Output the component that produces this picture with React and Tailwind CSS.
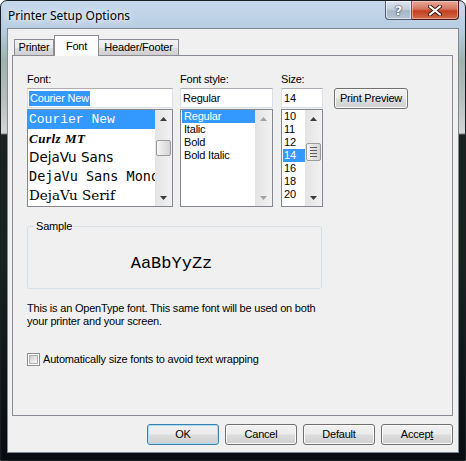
const ArrowUp = ({ disabled }) => (
  <svg width="7" height="4" viewBox="0 0 7 4">
    <polygon points="0,4 7,4 3.5,0" fill={disabled ? '#a3a3a3' : '#3b3b3b'} />
  </svg>
)

const ArrowDown = ({ disabled }) => (
  <svg width="7" height="4" viewBox="0 0 7 4">
    <polygon points="0,0 7,0 3.5,4" fill={disabled ? '#a3a3a3' : '#3b3b3b'} />
  </svg>
)

const ScrollBar = ({ thumbTop, thumbHeight, grip, disabled }) => (
  <div className="flex w-[17px] shrink-0 flex-col bg-[linear-gradient(to_right,#e3e3e3,#f2f2f2)]">
    <div className="flex h-[17px] items-center justify-center">
      <ArrowUp disabled={disabled} />
    </div>
    <div className="flex-1 px-[1px]">
      {!disabled && (
        <div
          className="flex flex-col items-center justify-center gap-[2px] rounded-[2px] border border-[#9b9b9b] bg-[linear-gradient(to_right,#f6f6f6,#e2e2e2_55%,#d4d4d4)]"
          style={{ marginTop: thumbTop, height: thumbHeight }}
        >
          {grip && (
            <>
              <div className="h-px w-[7px] bg-[#5a5a5a]" />
              <div className="h-px w-[7px] bg-[#5a5a5a]" />
              <div className="h-px w-[7px] bg-[#5a5a5a]" />
              <div className="h-px w-[7px] bg-[#5a5a5a]" />
            </>
          )}
        </div>
      )}
    </div>
    <div className="flex h-[17px] items-center justify-center">
      <ArrowDown disabled={disabled} />
    </div>
  </div>
)

const TextBox = ({ children, className }) => (
  <div
    className={`flex h-[20px] items-center border border-[#dbdfe6] border-t-[#abadb3] bg-white pl-[1px] ${className}`}
  >
    {children}
  </div>
)

const fontItems = [
  { name: 'Courier New', cls: "font-['Liberation_Mono',monospace] text-[13px] tracking-normal", selected: true },
  { name: 'Curlz MT', cls: "font-['Liberation_Serif',serif] italic font-bold text-[13px] tracking-[0.5px]" },
  { name: 'DejaVu Sans', cls: "font-['DejaVu_Sans',sans-serif] text-[13.5px] tracking-normal" },
  { name: 'DejaVu Sans Mono', cls: "font-['DejaVu_Sans_Mono',monospace] text-[13.5px] tracking-normal" },
  { name: 'DejaVu Serif', cls: "font-['DejaVu_Serif',serif] text-[13.5px] tracking-normal" },
]

const styleItems = ['Regular', 'Italic', 'Bold', 'Bold Italic']
const sizeItems = ['10', '11', '12', '14', '16', '18', '20']

const Button = ({ children, isDefault, className = '' }) => (
  <div
    className={`flex h-[21px] items-center justify-center rounded-[3px] border ${
      isDefault
        ? 'border-[#3c7fb1] shadow-[inset_0_0_0_1px_#a9dcf6]'
        : 'border-[#707070] shadow-[inset_0_0_0_1px_#fbfbfb]'
    } bg-[linear-gradient(to_bottom,#f2f2f2,#ebebeb_48%,#dddddd_52%,#cfcfcf)] ${className}`}
  >
    {children}
  </div>
)

export default function App() {
  return (
    <div className="flex h-[461px] w-[466px] flex-col overflow-hidden rounded-t-[7px] border border-[#1a1f24] bg-[linear-gradient(to_bottom,#c6d8ec_0px,#b8cde2_28px,#9eb3ad_60px,#b5bdbb_95px,#d3d5d5_132px,#1a211f_134px,#17231d_260px,#10161a_360px,#090c10_100%)] font-['Liberation_Sans',Arial,sans-serif] text-[11px] tracking-[-0.2px] text-black">
      {/* title bar */}
      <div className="flex h-[27px] shrink-0 items-start justify-between">
        <div className="pl-[7px] pt-[7px] font-['Noto_Sans',sans-serif] text-[12px] leading-[15px] tracking-normal [text-shadow:0_0_6px_#ffffff,0_0_8px_#ffffff]">
          Printer Setup Options
        </div>
        <div className="mr-[6px] flex">
          <div className="flex h-[19px] w-[27px] items-center justify-center rounded-bl-[4px] border border-t-0 border-[#4f5d6e] bg-[linear-gradient(to_bottom,#dfe6ee,#c3cfdc_45%,#a9b8c9_55%,#b6c5d4)] shadow-[inset_0_0_0_1px_rgba(255,255,255,0.55)]">
            <span className="font-['DejaVu_Sans',sans-serif] text-[13px] font-bold leading-none text-white [text-shadow:0_0_1px_#223,0_0_2px_#223]">
              ?
            </span>
          </div>
          <div className="flex h-[19px] w-[47px] items-center justify-center rounded-br-[4px] border border-l-0 border-t-0 border-[#4a1a12] bg-[linear-gradient(to_bottom,#e9a99a,#d5735f_45%,#c2401f_55%,#d16a4b)] shadow-[inset_0_0_0_1px_rgba(255,220,210,0.5)]">
            <svg width="14" height="11" viewBox="0 0 14 11">
              <path d="M2 1.5 L12 9.5 M12 1.5 L2 9.5" stroke="#3b1a14" strokeWidth="4" strokeLinecap="round" />
              <path d="M2 1.5 L12 9.5 M12 1.5 L2 9.5" stroke="#ffffff" strokeWidth="2.2" strokeLinecap="round" />
            </svg>
          </div>
        </div>
      </div>

      {/* client area */}
      <div className="mx-[6px] flex flex-col border border-[#7d8994] bg-[#f0f0f0] pl-[4px] pr-[5px] pt-[6px] pb-[7px]">
        {/* tabs */}
        <div className="ml-[2px] flex h-[20px] items-end">
          <div className="flex h-[16px] w-[40px] items-center justify-center border border-b-0 border-[#898c95] bg-[linear-gradient(to_bottom,#f3f3f3,#ebebeb_50%,#dddddd_51%,#cfcfcf)]">
            Printer
          </div>
          <div className="relative z-10 -mb-px flex h-[21px] w-[45px] items-start justify-center border border-b-0 border-[#898c95] bg-[#fcfcfc] pt-[2px]">
            Font
          </div>
          <div className="flex h-[16px] w-[80px] items-center justify-center border border-b-0 border-l-0 border-[#898c95] bg-[linear-gradient(to_bottom,#f3f3f3,#ebebeb_50%,#dddddd_51%,#cfcfcf)]">
            Header/Footer
          </div>
        </div>

        {/* panel */}
        <div className="flex h-[361px] w-[441px] flex-col border border-[#898c95] bg-[#f0f0f0] pl-[14px] pt-[17px]">
          <div className="flex items-start">
            {/* font column */}
            <div className="flex w-[146px] flex-col">
              <div className="mb-[2px] h-[13px] leading-[13px]">Font:</div>
              <TextBox>
                <span className="bg-[#3399ff] px-[1px] leading-[15px] text-white">Courier New</span>
              </TextBox>
              <div className="mt-[1px] flex h-[98px] border border-[#828790] bg-white">
                <div className="flex-1 overflow-hidden">
                  {fontItems.map((f) => (
                    <div
                      key={f.name}
                      className={`flex h-[19px] items-center whitespace-nowrap pl-[1px] ${f.cls} ${
                        f.selected ? 'bg-[#3399ff] text-white' : ''
                      }`}
                    >
                      {f.name}
                    </div>
                  ))}
                </div>
                <ScrollBar thumbTop={13} thumbHeight={16} />
              </div>
            </div>

            {/* font style column */}
            <div className="ml-[7px] flex w-[93px] flex-col">
              <div className="mb-[2px] h-[13px] leading-[13px]">Font style:</div>
              <TextBox>
                <span className="pl-[1px]">Regular</span>
              </TextBox>
              <div className="mt-[1px] flex h-[98px] border border-[#828790] bg-white">
                <div className="flex-1 overflow-hidden pl-[1px]">
                  {styleItems.map((s, i) => (
                    <div
                      key={s}
                      className={`flex h-[13px] items-center pl-[2px] ${i === 0 ? 'bg-[#3399ff] text-white' : ''}`}
                    >
                      {s}
                    </div>
                  ))}
                </div>
                <ScrollBar disabled />
              </div>
            </div>

            {/* size column */}
            <div className="ml-[8px] flex w-[42px] flex-col">
              <div className="mb-[2px] h-[13px] leading-[13px]">Size:</div>
              <TextBox>
                <span className="pl-[1px]">14</span>
              </TextBox>
              <div className="mt-[1px] flex h-[98px] border border-[#828790] bg-white">
                <div className="flex-1 overflow-hidden pl-[1px]">
                  {sizeItems.map((s) => (
                    <div
                      key={s}
                      className={`flex h-[13px] items-center pl-[1px] ${s === '14' ? 'bg-[#3399ff] text-white' : ''}`}
                    >
                      {s}
                    </div>
                  ))}
                </div>
                <ScrollBar thumbTop={16} thumbHeight={18} grip />
              </div>
            </div>

            <Button className="ml-[11px] mt-[15px] w-[74px]">Print Preview</Button>
          </div>

          {/* sample */}
          <div className="relative mt-[19px] flex h-[63px] w-[295px] justify-center rounded-[3px] border border-[#d5dfe5] pt-[27px]">
            <div className="absolute left-[6px] top-[-7px] bg-[#f0f0f0] px-[2px] leading-[13px]">Sample</div>
            <div className="pr-[6px] font-['Liberation_Mono',monospace] text-[17px] leading-[20px] tracking-normal">AaBbYyZz</div>
          </div>

          <div className="mt-[13px] leading-[13px]">
            This is an OpenType font. This same font will be used on both
            <br />
            your printer and your screen.
          </div>

          <div className="mt-[25px] flex h-[13px] items-center gap-[3px]">
            <div className="h-[13px] w-[13px] border border-[#8f8f8f] bg-white p-[1px]">
              <div className="h-full w-full border border-[#b3b3b3] bg-[linear-gradient(135deg,#d0d0d0,#f7f7f7)]" />
            </div>
            <span>Automatically size fonts to avoid text wrapping</span>
          </div>
        </div>

        {/* bottom buttons */}
        <div className="mt-[8px] flex justify-end gap-[6px]">
          <Button isDefault className="w-[72px]">OK</Button>
          <Button className="w-[72px]">Cancel</Button>
          <Button className="w-[72px]">Default</Button>
          <Button className="w-[72px]">
            <span>
              Accep<span className="underline">t</span>
            </span>
          </Button>
        </div>
      </div>
    </div>
  )
}
